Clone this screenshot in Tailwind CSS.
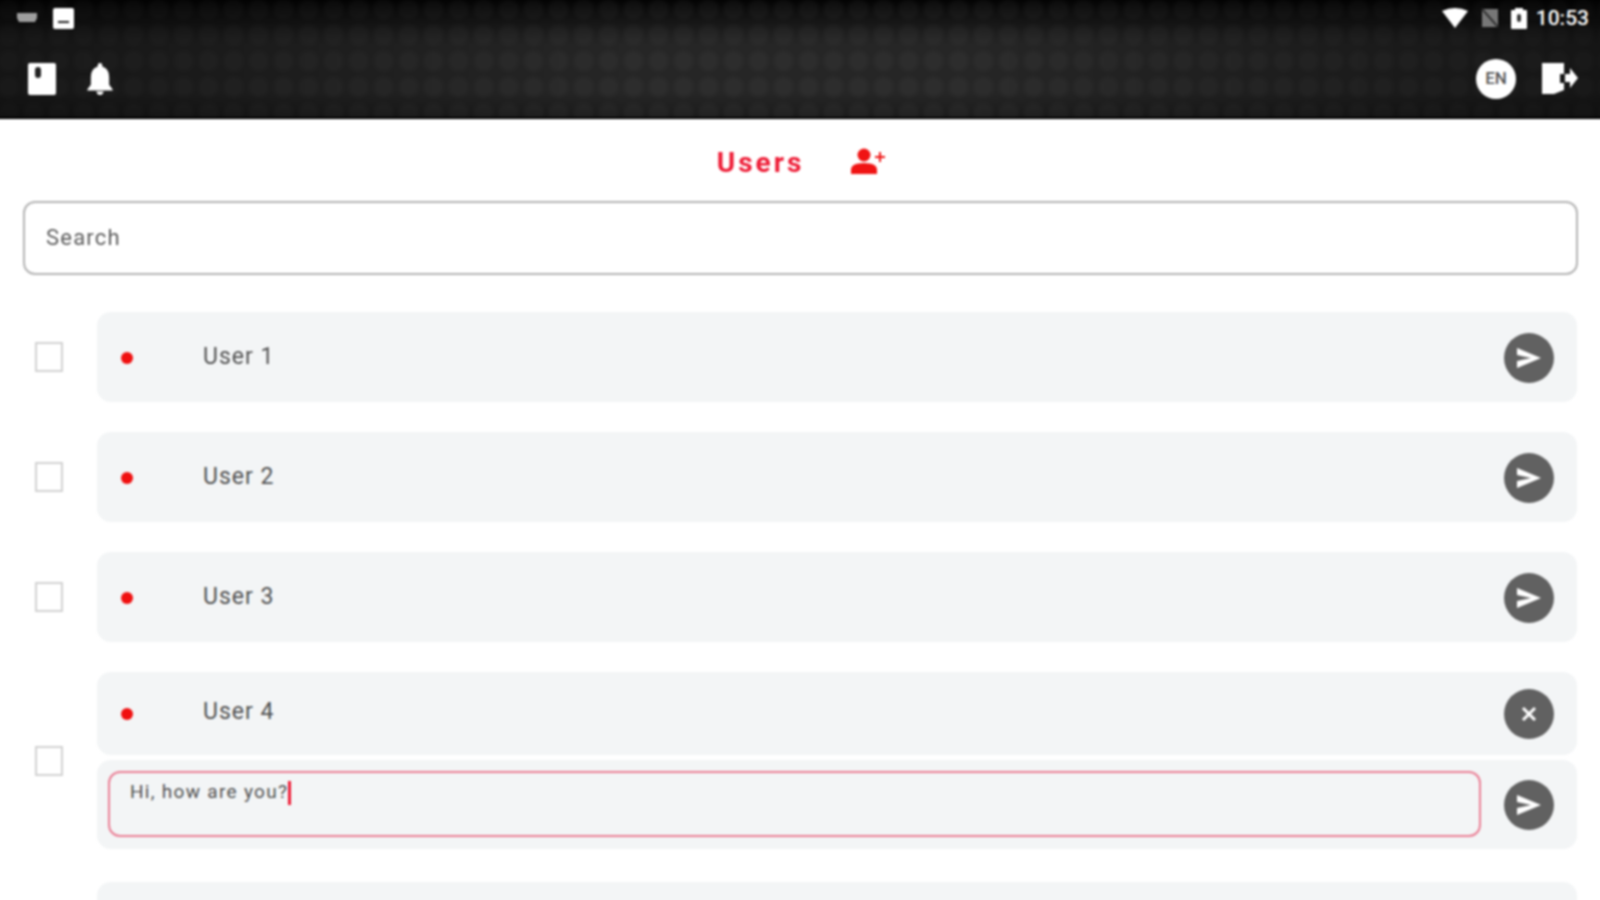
<!DOCTYPE html>
<html lang="en">
<head>
    <meta charset="UTF-8">
    <title>Users</title>
    <script src="https://cdn.jsdelivr.net/npm/@tailwindcss/browser@4"></script>
</head>
<body class="bg-white overflow-hidden font-['Roboto',sans-serif]">
<!-- 4px bleed on top and left so the blur does not fade the header edges -->
<div class="w-[1608px] h-[908px] ml-[-4px] mt-[-4px] overflow-hidden flex flex-col blur-[0.8px]">

    <!-- Header -->
    <header class="h-[123px] shrink-0 flex flex-col pt-[4px] pl-[4px] pr-[4px] border-b-2 border-black bg-[#1a1a1a] bg-[linear-gradient(90deg,rgba(0,0,0,0.45),rgba(0,0,0,0)_40%,rgba(0,0,0,0)_60%,rgba(0,0,0,0.45)),radial-gradient(circle,rgba(255,255,255,0.03)_40%,rgba(255,255,255,0)_70%),linear-gradient(180deg,#000_0%,#111_15%,#262626_40%,#262626_80%,#1a1a1a_100%)] bg-[size:100%_100%,25px_26px,100%_100%]">
        <div class="h-[36px] flex items-center justify-between pl-[16px] pr-[11px]">
            <div class="flex items-center gap-[15px]">
                <svg width="22" height="14" viewBox="0 0 22 14"><path d="M1 2h20v5l-2 4H3L1 7z" fill="#9e9e9e"/></svg>
                <svg width="21" height="21" viewBox="0 0 21 21"><rect width="21" height="21" rx="2" fill="#fff"/><rect x="5" y="13" width="11" height="2" fill="#222"/></svg>
            </div>
            <div class="flex items-center text-white">
                <svg width="26" height="20" viewBox="0 0 26 20" class="mr-[13px]"><path d="M0 3Q13-3 26 3L13 20z" fill="#fff"/></svg>
                <svg width="18" height="20" viewBox="0 0 18 20" class="mr-[12px]"><path d="M1 1h16v18H1z" fill="#777"/><path d="M1 1l16 18" stroke="#333" stroke-width="2"/></svg>
                <svg width="16" height="21" viewBox="0 0 16 21" class="mr-[9px]"><path d="M4 0h8v2h3q1 0 1 1v17q0 1-1 1H1q-1 0-1-1V3q0-1 1-1h3z" fill="#fff"/><rect x="6" y="6" width="4" height="8" rx="2" fill="#333"/></svg>
                <span class="text-[21px] font-medium leading-none">10:53</span>
            </div>
        </div>
        <div class="flex-1 flex items-center justify-between pl-[28px] pr-[22px] pt-[4px]">
            <div class="flex items-center gap-[30px]">
                <svg width="28" height="32" viewBox="0 0 28 32"><rect width="28" height="32" rx="2" fill="#fff"/><rect x="7" y="4" width="6" height="11" rx="3" fill="#222"/></svg>
                <svg width="28" height="32" viewBox="0 0 24 28"><path d="M12 0q2 0 2 2v1q6 2 6 9v7l3 4v1H1v-1l3-4v-7q0-7 6-9V2q0-2 2-2z" fill="#fff"/><path d="M9 25h6q0 3-3 3t-3-3z" fill="#fff"/></svg>
            </div>
            <div class="flex items-center gap-[25px]">
                <div class="w-[40px] h-[40px] rounded-full bg-white flex items-center justify-center text-[17px] font-medium text-[#555]">EN</div>
                <svg width="37" height="33" viewBox="0 0 37 33"><path d="M1 1h22v11h-4v9h4v7l-10 4H1z" fill="#fff"/><path d="M24 12h5V6l8 10-8 10v-6h-5z" fill="#fff"/></svg>
            </div>
        </div>
    </header>

    <div class="pl-[4px]">
        <!-- Title -->
        <div class="h-[82px] w-[1600px] flex items-center justify-center pt-[5px]">
            <h1 class="text-[28px] font-bold text-[#ee1c36] tracking-[3px] ml-[2px]">Users</h1>
            <svg class="ml-[47px] mt-[-3px]" width="34" height="26" viewBox="0 0 34 26"><circle cx="13" cy="7" r="6.5" fill="#f01414"/><path d="M0 26v-4q0-7 13-7t13 7v4z" fill="#f01414"/><path d="M24 8h4V4h2v4h4v2h-4v4h-2v-4h-4z" fill="#f01414"/></svg>
        </div>

        <!-- Search -->
        <div class="px-[23px]">
            <div class="h-[74px] w-[1555px] border-2 border-[#b4b4b4] rounded-[12px] flex items-center pl-[21px] pb-[2px] text-[22px] tracking-[1.2px] text-[#5c5c5c]">Search</div>
        </div>

        <!-- User list -->
        <div class="mt-[37px] flex flex-col gap-[30px] pl-[35px]">
            <div class="flex items-center">
                <div class="w-[28px] h-[30px] border-2 border-[#d2d2d2] bg-white shrink-0"></div>
                <div class="ml-[34px] w-[1480px] h-[90px] rounded-[14px] bg-[#f3f5f6] flex items-center pl-[24px] pr-[24px]">
                    <span class="w-[12px] h-[12px] rounded-full bg-[#f01010] mt-[1px]"></span>
                    <span class="ml-[70px] text-[23px] tracking-[1px] text-[#505050] flex-1 mt-[1px]">User 1</span>
                    <span class="w-[50px] h-[50px] rounded-full bg-[#616161] flex items-center justify-center mt-[1px] mr-[-1px]">
                        <svg width="26" height="22" viewBox="0 0 26 22"><path d="M1 1l24 10L1 21v-7l14-3L1 8z" fill="#fff"/></svg>
                    </span>
                </div>
            </div>
            <div class="flex items-center">
                <div class="w-[28px] h-[30px] border-2 border-[#d2d2d2] bg-white shrink-0"></div>
                <div class="ml-[34px] w-[1480px] h-[90px] rounded-[14px] bg-[#f3f5f6] flex items-center pl-[24px] pr-[24px]">
                    <span class="w-[12px] h-[12px] rounded-full bg-[#f01010] mt-[1px]"></span>
                    <span class="ml-[70px] text-[23px] tracking-[1px] text-[#505050] flex-1 mt-[1px]">User 2</span>
                    <span class="w-[50px] h-[50px] rounded-full bg-[#616161] flex items-center justify-center mt-[1px] mr-[-1px]">
                        <svg width="26" height="22" viewBox="0 0 26 22"><path d="M1 1l24 10L1 21v-7l14-3L1 8z" fill="#fff"/></svg>
                    </span>
                </div>
            </div>
            <div class="flex items-center">
                <div class="w-[28px] h-[30px] border-2 border-[#d2d2d2] bg-white shrink-0"></div>
                <div class="ml-[34px] w-[1480px] h-[90px] rounded-[14px] bg-[#f3f5f6] flex items-center pl-[24px] pr-[24px]">
                    <span class="w-[12px] h-[12px] rounded-full bg-[#f01010] mt-[1px]"></span>
                    <span class="ml-[70px] text-[23px] tracking-[1px] text-[#505050] flex-1 mt-[1px]">User 3</span>
                    <span class="w-[50px] h-[50px] rounded-full bg-[#616161] flex items-center justify-center mt-[1px] mr-[-1px]">
                        <svg width="26" height="22" viewBox="0 0 26 22"><path d="M1 1l24 10L1 21v-7l14-3L1 8z" fill="#fff"/></svg>
                    </span>
                </div>
            </div>
            <div class="flex items-center">
                <div class="w-[28px] h-[30px] border-2 border-[#d2d2d2] bg-white shrink-0"></div>
                <div class="ml-[34px] w-[1480px] flex flex-col gap-[5px]">
                    <div class="h-[83px] rounded-[14px] bg-[#f3f5f6] flex items-center pl-[24px] pr-[24px]">
                        <span class="w-[12px] h-[12px] rounded-full bg-[#f01010]"></span>
                        <span class="ml-[70px] text-[23px] tracking-[1px] text-[#505050] flex-1 mt-[-3px]">User 4</span>
                        <span class="w-[50px] h-[50px] rounded-full bg-[#616161] flex items-center justify-center mr-[-1px]">
                            <svg width="16" height="16" viewBox="0 0 16 16"><path d="M2 2l12 12M14 2L2 14" stroke="#fff" stroke-width="3"/></svg>
                        </span>
                    </div>
                    <div class="h-[89px] rounded-[14px] bg-[#f3f5f6] flex items-center pl-[11px] pr-[24px]">
                        <div class="w-[1373px] h-[66px] mb-[2px] border-2 border-[#ea7f95] rounded-[12px] pl-[20px] pt-[5px] text-[19px] tracking-[1.3px] leading-[28px] text-[#505050] flex items-start">
                            <span>Hi, how are you?</span><span class="w-[3px] h-[24px] bg-[#ee1c36] mt-[3px]"></span>
                        </div>
                        <span class="ml-auto w-[50px] h-[50px] rounded-full bg-[#616161] flex items-center justify-center mr-[-1px]">
                            <svg width="26" height="22" viewBox="0 0 26 22"><path d="M1 1l24 10L1 21v-7l14-3L1 8z" fill="#fff"/></svg>
                        </span>
                    </div>
                </div>
            </div>
            <div class="flex items-center mt-[3px]">
                <div class="w-[28px] h-[30px] shrink-0"></div>
                <div class="ml-[34px] w-[1480px] h-[90px] rounded-[14px] bg-[#f3f5f6]"></div>
            </div>
        </div>
    </div>
</div>
</body>
</html>
